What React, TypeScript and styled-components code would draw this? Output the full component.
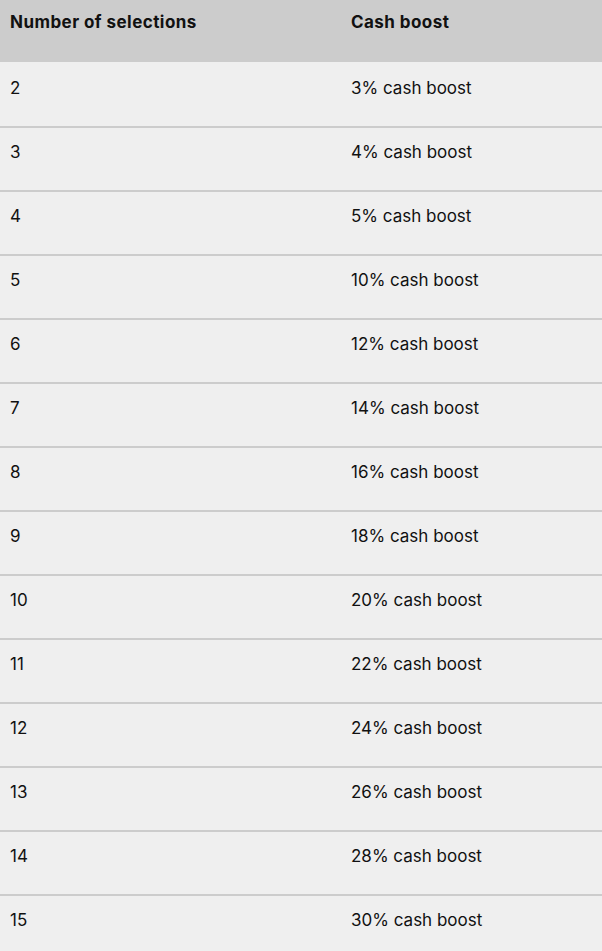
import React from "react";
import styled, { createGlobalStyle } from "styled-components";

const Global = createGlobalStyle`
  html, body { margin: 0; padding: 0; background: #efefef; }
  body { font-family: Inter, "Noto Sans", sans-serif; color: #111; }
`;

const Table = styled.div`
  width: 602px;
  display: flex;
  flex-direction: column;
`;

const HeaderRow = styled.div`
  display: grid;
  grid-template-columns: 341px 1fr;
  height: 62px;
  background: #cccccc;
  box-sizing: border-box;
  padding-top: 10px;
`;

const Row = styled.div<{ $first?: boolean }>`
  display: grid;
  grid-template-columns: 341px 1fr;
  height: 64px;
  box-sizing: border-box;
  background: #efefef;
  border-top: ${(p) => (p.$first ? "none" : "2px solid #cccccc")};
  padding-top: ${(p) => (p.$first ? "14px" : "12px")};
`;

const HeadCell = styled.div`
  padding: 0 10px;
  font-size: 17px;
  line-height: 24px;
  font-weight: 700;
  letter-spacing: 0.45px;
  color: #111;
`;

const Cell = styled.div`
  padding: 0 10px;
  font-size: 17px;
  line-height: 24px;
  font-weight: 400;
  color: #111;
`;

const data: [number, number][] = [
  [2, 3], [3, 4], [4, 5], [5, 10], [6, 12], [7, 14], [8, 16],
  [9, 18], [10, 20], [11, 22], [12, 24], [13, 26], [14, 28], [15, 30],
];

export default function App() {
  return (
    <>
      <Global />
      <Table>
        <HeaderRow>
          <HeadCell>Number of selections</HeadCell>
          <HeadCell>Cash boost</HeadCell>
        </HeaderRow>
        {data.map(([n, p], i) => (
          <Row key={n} $first={i === 0}>
            <Cell>{n}</Cell>
            <Cell>{p}% cash boost</Cell>
          </Row>
        ))}
      </Table>
    </>
  );
}
